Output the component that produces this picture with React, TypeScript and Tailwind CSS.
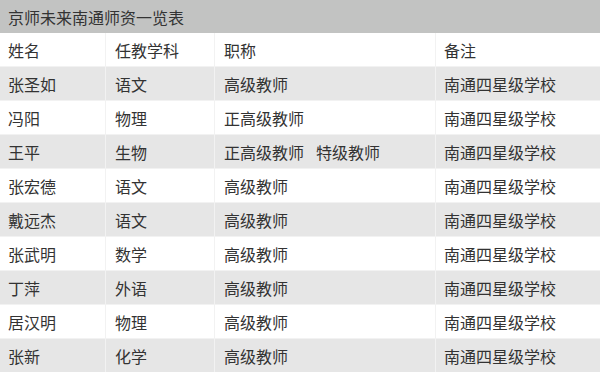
const rows: [string, string, string[], string][] = [
  ["张圣如", "语文", ["高级教师"], "南通四星级学校"],
  ["冯阳", "物理", ["正高级教师"], "南通四星级学校"],
  ["王平", "生物", ["正高级教师", "特级教师"], "南通四星级学校"],
  ["张宏德", "语文", ["高级教师"], "南通四星级学校"],
  ["戴远杰", "语文", ["高级教师"], "南通四星级学校"],
  ["张武明", "数学", ["高级教师"], "南通四星级学校"],
  ["丁萍", "外语", ["高级教师"], "南通四星级学校"],
  ["居汉明", "物理", ["高级教师"], "南通四星级学校"],
  ["张新", "化学", ["高级教师"], "南通四星级学校"],
];

function Row({ name, subject, titles, note, gray }: { name: string; subject: string; titles: string[]; note: string; gray: boolean }) {
  return (
    <div className={`flex h-[34px] border-b border-[#f2f2f2] ${gray ? "bg-[#e6e6e6]" : "bg-white"}`}>
      <div className="w-[106px] flex items-center pl-2 border-r border-[#f2f2f2]">{name}</div>
      <div className="w-[109px] flex items-center pl-[9px] border-r border-[#f2f2f2]">{subject}</div>
      <div className="w-[221px] flex items-center gap-[12px] pl-[9px] border-r border-[#f2f2f2]">
        {titles.map((t) => (
          <span key={t}>{t}</span>
        ))}
      </div>
      <div className="flex-1 flex items-center pl-[8px]">{note}</div>
    </div>
  );
}

export default function App() {
  return (
    <div
      className="w-[600px] h-[372px] overflow-hidden bg-white text-[16px] text-[#333]"
      style={{ fontFamily: '"Noto Sans CJK SC", "Noto Sans", sans-serif' }}
    >
      <div className="h-[33px] bg-[#c2c3c2] flex items-center pl-2">京师未来南通师资一览表</div>
      <Row name="姓名" subject="任教学科" titles={["职称"]} note="备注" gray={false} />
      {rows.map((r, i) => (
        <Row key={i} name={r[0]} subject={r[1]} titles={r[2]} note={r[3]} gray={i % 2 === 0} />
      ))}
    </div>
  );
}
